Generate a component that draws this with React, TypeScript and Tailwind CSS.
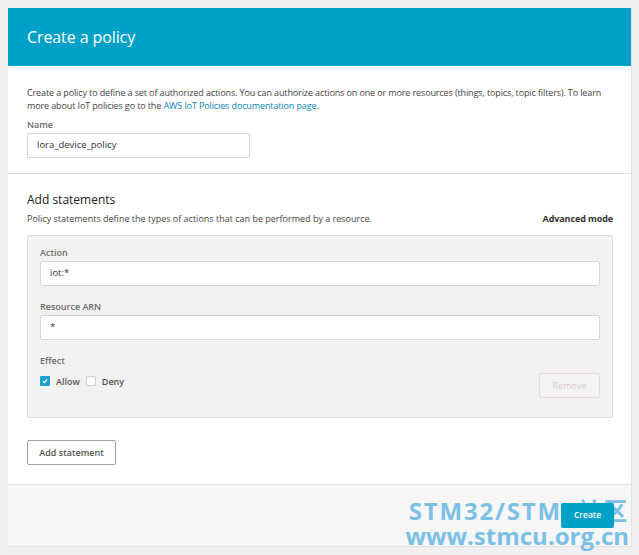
const font = { fontFamily: '"Open Sans", "Liberation Sans", sans-serif' };

function Label({ children }: { children: React.ReactNode }) {
  return <div className="text-[9px] leading-[12px] font-semibold text-[#6b6b6b] mb-[2px]">{children}</div>;
}

function TextInput({ value, className = "" }: { value: string; className?: string }) {
  return (
    <div
      className={`h-[25px] bg-white border border-[#d5d5d5] rounded-[2px] flex items-center px-[9px] text-[9.5px] text-[#333] ${className}`}
    >
      {value}
    </div>
  );
}

export default function App() {
  return (
    <div className="min-h-[555px] w-[639px] bg-[#efefef] pt-[8px] pl-[8px]" style={font}>
      <div className="w-[624px] bg-white border-r border-[#e2e2e2] relative">
        <div className="h-[58px] bg-[#00a1c9] flex items-center pl-[19px]">
          <h1 className="text-[16px] text-white tracking-[-0.1px]">Create a policy</h1>
        </div>

        <div className="pl-[19px] pr-[18px] pt-[21px] pb-[15px] border-b border-[#dedede]">
          <p className="text-[9px] leading-[12.5px] text-[#444] tracking-[-0.12px] whitespace-nowrap">
            Create a policy to define a set of authorized actions. You can authorize actions on one or more resources (things, topics, topic filters). To learn
            <br />
            more about IoT policies go to the{" "}
            <span className="text-[#0a86b5]">AWS IoT Policies documentation page</span>.
          </p>
          <div className="mt-[7px]">
            <Label>Name</Label>
            <TextInput value="lora_device_policy" className="w-[223px]" />
          </div>
        </div>

        <div className="pl-[19px] pr-[18px] pt-[17px] pb-[19px]">
          <h2 className="text-[12px] text-[#222]">Add statements</h2>
          <div className="flex justify-between items-center mt-[3px]">
            <p className="text-[9px] text-[#444]">
              Policy statements define the types of actions that can be performed by a resource.
            </p>
            <span className="text-[9px] font-bold text-[#333] tracking-[-0.1px]">Advanced mode</span>
          </div>

          <div className="mt-[9px] bg-[#f2f2f2] border border-[#dcdcdc] rounded-[2px] px-[12px] pt-[11px] pb-[19px]">
            <Label>Action</Label>
            <TextInput value="iot:*" />
            <div className="mt-[15px]">
              <Label>Resource ARN</Label>
              <TextInput value="*" />
            </div>
            <div className="mt-[15px] flex justify-between items-end">
              <div className="pb-[10px]">
                <Label>Effect</Label>
                <div className="flex items-center mt-[8px] text-[9px] font-semibold text-[#555]">
                  <span className="w-[10px] h-[10px] bg-[#1e9ecf] rounded-[1px] flex items-center justify-center">
                    <svg viewBox="0 0 10 10" className="w-[8px] h-[8px]">
                      <path d="M2.3 5.2 L4.2 7 L7.8 3" fill="none" stroke="white" strokeWidth="1.6" />
                    </svg>
                  </span>
                  <span className="ml-[6px]">Allow</span>
                  <span className="ml-[6px] w-[10px] h-[10px] bg-white border border-[#cfcfcf] rounded-[1px]" />
                  <span className="ml-[6px]">Deny</span>
                </div>
              </div>
              <div className="w-[61px] h-[25px] border border-[#ecd9d9] bg-[#f4f4f4] rounded-[2px] flex items-center justify-center text-[9px] text-[#d8c8c8]">
                Remove
              </div>
            </div>
          </div>

          <div className="mt-[22px] w-[89px] h-[25px] border border-[#9e9e9e] rounded-[2px] flex items-center justify-center text-[9px] font-semibold text-[#555]">
            Add statement
          </div>
        </div>

        <div className="h-[63px] bg-[#f6f6f6] border-t border-b border-[#e2e2e2] relative flex items-center justify-end pr-[17px]">
          <div className="absolute right-[2px] top-[13px] leading-[25px] text-right font-bold text-[#7cc0e6] pointer-events-none">
            <div className="text-[24px] tracking-[1.8px]" style={{ fontFamily: '"Open Sans", "Noto Sans CJK SC", sans-serif' }}>
              STM32/STM8社区
            </div>
            <div className="text-[24px] tracking-[0px]">www.stmcu.org.cn</div>
          </div>
          <div className="relative w-[53px] h-[25px] bg-[#00a1c9] rounded-[2px] flex items-center justify-center text-[8.5px] font-semibold text-white">
            Create
          </div>
        </div>
      </div>
    </div>
  );
}
